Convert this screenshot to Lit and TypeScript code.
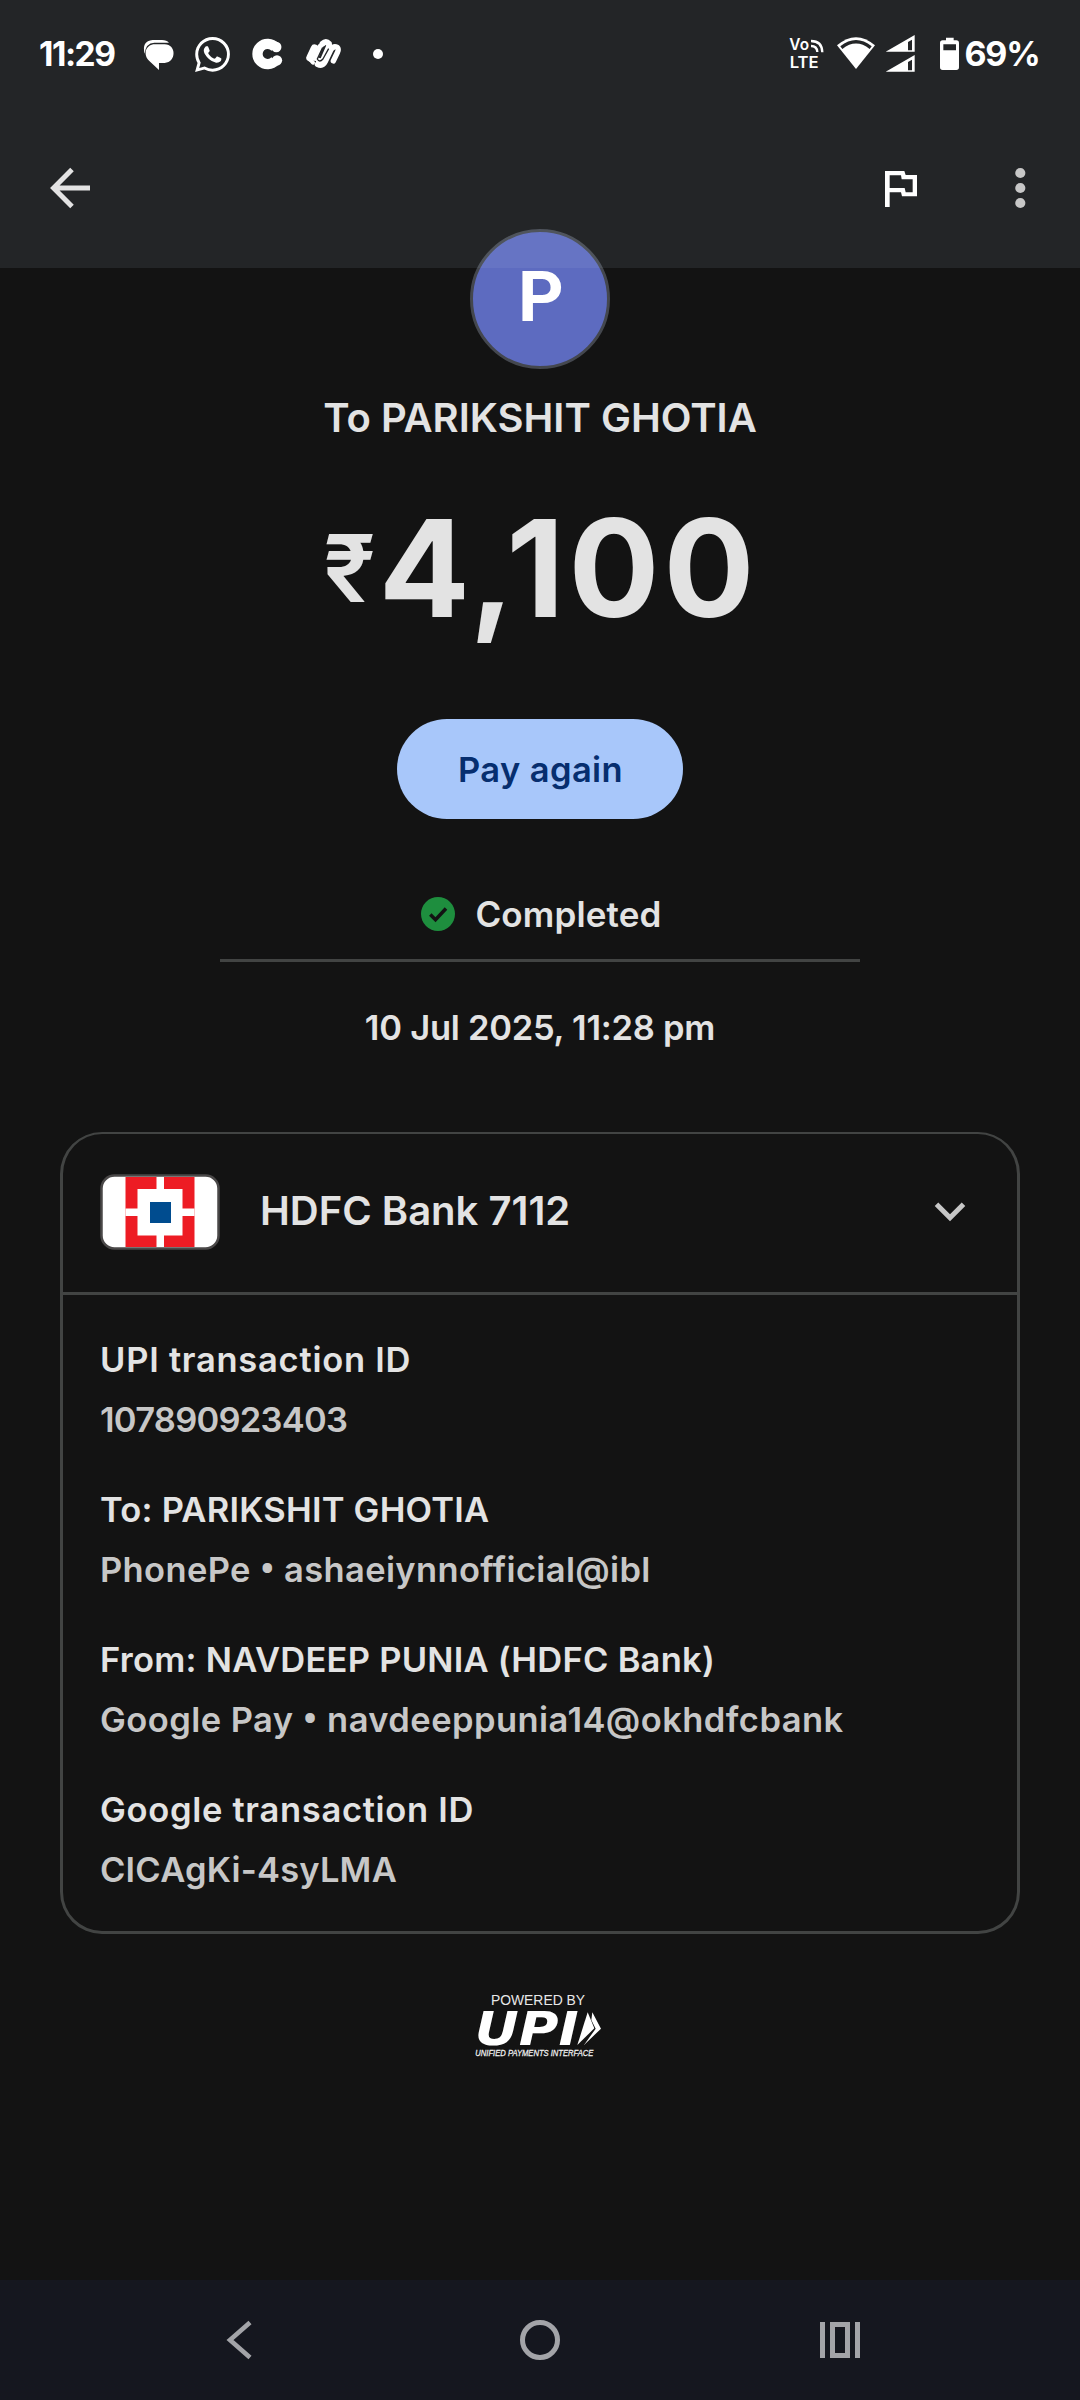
import { LitElement, html, css } from "lit";
import { customElement, property } from "lit/decorators.js";

const palette = css`
  :host {
    --surface: #131313;
    --on-surface: #e3e3e3;
    --on-surface-variant: #c7c7c7;
    --outline: #424443;
    font-family: Inter, "Liberation Sans", sans-serif;
    color: var(--on-surface);
  }
  svg {
    display: block;
    flex: none;
    overflow: visible;
  }
`;

@customElement("status-bar")
class StatusBar extends LitElement {
  static styles = [
    palette,
    css`
      :host {
        display: flex;
        justify-content: space-between;
        align-items: center;
        height: 108px;
        color: #fff;
      }
      .side {
        display: flex;
        align-items: center;
      }
      .left {
        padding-left: 39px;
      }
      .right {
        width: 292px;
      }
      .time,
      .percent {
        font-size: 33.5px;
        line-height: 40px;
        font-weight: 700;
        white-space: nowrap;
      }
      .time {
        width: 103px;
        letter-spacing: -1.5px;
      }
      .percent {
        font-size: 34px;
        margin-left: 4px;
        letter-spacing: -1.1px;
      }
      .wa { margin: 1px 21px 0 20px; }
      .wave { margin-left: 20px; }
      .dot {
        width: 10px;
        height: 10px;
        border-radius: 50%;
        background: #fff;
        margin-left: 31px;
      }
      .wifi { margin: 0 9px 0 11px; }
      .battery { margin-left: 24px; }
      .lte {
        font-family: Inter, sans-serif;
        font-weight: 600;
      }
    `,
  ];

  render() {
    return html`
      <div class="side left">
        <span class="time">11:29</span>
        <svg width="33.3" height="33.3" viewBox="426 112 100 100">
          <path fill="#fff" d="M458 121H486Q500 121 507 129H463Q437 130 434 162Q424 125 458 121Z" />
          <path fill="#fff" d="M465 134H494C530 134 530 188 494 190H477V211L448 184C428 166 436 134 465 134Z" />
        </svg>
        <svg class="wa" width="35" height="35" viewBox="0 0 24 24">
          <path fill="#fff" d="M17.472 14.382c-.297-.149-1.758-.867-2.03-.967-.273-.099-.471-.148-.67.15-.197.297-.767.966-.94 1.164-.173.199-.347.223-.644.075-.297-.15-1.255-.463-2.39-1.475-.883-.788-1.48-1.761-1.653-2.059-.173-.297-.018-.458.13-.606.134-.133.298-.347.446-.52.149-.174.198-.298.298-.497.099-.198.05-.371-.025-.52-.075-.149-.669-1.612-.916-2.207-.242-.579-.487-.5-.669-.51-.173-.008-.371-.01-.57-.01-.198 0-.52.074-.792.372-.272.297-1.04 1.016-1.04 2.479 0 1.462 1.065 2.875 1.213 3.074.149.198 2.096 3.2 5.077 4.487.709.306 1.262.489 1.694.625.712.227 1.36.195 1.871.118.571-.085 1.758-.719 2.006-1.413.248-.694.248-1.289.173-1.413-.074-.124-.272-.198-.57-.347m-5.421 7.403h-.004a9.87 9.87 0 01-5.031-1.378l-.361-.214-3.741.982.998-3.648-.235-.374a9.86 9.86 0 01-1.51-5.26c.001-5.45 4.436-9.884 9.888-9.884 2.64 0 5.122 1.03 6.988 2.898a9.825 9.825 0 012.893 6.994c-.003 5.45-4.437 9.884-9.885 9.884m8.413-18.297A11.815 11.815 0 0012.05 0C5.495 0 .16 5.335.157 11.892c0 2.096.547 4.142 1.588 5.945L.057 24l6.305-1.654a11.882 11.882 0 005.683 1.448h.005c6.554 0 11.89-5.335 11.893-11.893a11.821 11.821 0 00-3.48-8.413z" />
        </svg>
        <svg width="33.3" height="33.3" viewBox="756 112 100 100">
          <path d="M829 143A30.5 30.5 0 1 0 829 183" fill="none" stroke="#fff" stroke-width="31" />
          <circle cx="832" cy="142" r="15.5" fill="#fff" />
          <circle cx="834" cy="182" r="15.5" fill="#fff" />
        </svg>
        <svg class="wave" width="37.3" height="33.3" viewBox="915 112 112 100">
          <g fill="none" stroke="#fff" stroke-linecap="round" stroke-linejoin="round">
            <path stroke-width="24" d="M944 146L931 174" />
            <path stroke-width="12" d="M926 174L939 189" />
            <path stroke-width="18" d="M968 132Q978 122 987 132Q989 138 985 146L970 180Q965 188 957 184" />
            <path stroke-width="16" d="M961 140L946 176" />
            <path stroke-width="16" d="M952 194Q968 202 976 186L993 150Q1001 137 1012 143Q1017 148 1013 157L1000 184" />
          </g>
          <path d="M968 144L952 178Q958 190 969 178L986 147" fill="none" stroke="#232527" stroke-width="4" />
        </svg>
        <span class="dot"></span>
      </div>
      <div class="side right">
        <svg width="36.7" height="33.3" viewBox="84 112 110 100" fill="#fff">
          <text class="lte" x="88" y="152" font-size="47" textLength="59" lengthAdjust="spacingAndGlyphs">Vo</text>
          <text class="lte" x="89" y="205" font-size="48" textLength="87" lengthAdjust="spacingAndGlyphs">LTE</text>
          <g fill="none" stroke="#fff" stroke-width="7">
            <path d="M153 124Q186 124 187 158" />
            <path d="M153 139Q171 139 172 157" />
          </g>
        </svg>
        <svg class="wifi" width="40" height="40" viewBox="228 102 120 120">
          <path fill="#fff" d="M231 136Q288 87 345 136L288 207Z" />
          <path fill="none" stroke="#232527" stroke-width="10" d="M244 143Q288 108 332 143" />
        </svg>
        <svg width="30.7" height="40" viewBox="376 102 92 120">
          <path fill="#fff" fill-rule="evenodd" d="M378 155L465 105V155ZM445 126V151H457V119ZM378 215L465 165V215ZM445 186V211H457V179Z" />
        </svg>
        <svg class="battery" width="21" height="33.3" viewBox="540 110 63 100">
          <path fill="#fff" fill-rule="evenodd" d="M561 112H584V120H592Q600 120 600 128V201Q600 209 592 209H551Q543 209 543 201V128Q543 120 551 120H561ZM553 132V150H591V132Z" />
        </svg>
        <span class="percent">69%</span>
      </div>
    `;
  }
}

@customElement("app-toolbar")
class AppToolbar extends LitElement {
  static styles = [
    palette,
    css`
      :host {
        display: flex;
        align-items: center;
        height: 160px;
        padding: 0 54px 0 50px;
      }
      .spacer { flex: 1; }
      .dots { margin-left: 98px; }
    `,
  ];

  render() {
    return html`
      <svg width="40" height="40" viewBox="0 0 40 40" fill="none" stroke="#e3e3e3" stroke-width="5">
        <path d="M40 20H5M22 1.6L3.6 20L22 38.4" />
      </svg>
      <span class="spacer"></span>
      <svg width="32" height="36" viewBox="75 63 96 108">
        <path fill="#fff" fill-rule="evenodd" d="M75 63H133L137 75H171V139H126L123 127H89V171H75ZM89 76V114H134L137 127H158V88H125L123 76Z" transform="translate(0 3)" />
      </svg>
      <svg class="dots" width="10.6" height="42" viewBox="0 0 10.6 42" fill="#c7c7c7">
        <circle cx="5.3" cy="6" r="5.1" />
        <circle cx="5.3" cy="21" r="5.1" />
        <circle cx="5.3" cy="36" r="5.1" />
      </svg>
    `;
  }
}

interface Detail {
  label: string;
  value: string[];
  kind: string;
}

@customElement("transaction-card")
class TransactionCard extends LitElement {
  @property() account = "HDFC Bank 7112";
  @property({ attribute: false }) details: Detail[] = [
    { label: "UPI transaction ID", value: ["107890923403"], kind: "upi" },
    { label: "To: PARIKSHIT GHOTIA", value: ["PhonePe", "ashaeiynnofficial@ibl"], kind: "to" },
    { label: "From: NAVDEEP PUNIA (HDFC Bank)", value: ["Google Pay", "navdeeppunia14@okhdfcbank"], kind: "from" },
    { label: "Google transaction ID", value: ["CICAgKi-4syLMA"], kind: "google" },
  ];

  static styles = [
    palette,
    css`
      :host {
        display: block;
        box-sizing: border-box;
        width: 960px;
        border: 3px solid var(--outline);
        border-top-width: 2px;
        border-radius: 42px;
        font-weight: 600;
      }
      .head {
        display: flex;
        align-items: center;
        height: 158px;
        padding: 0 51px 0 37px;
        border-bottom: 3px solid var(--outline);
      }
      .logo { margin-bottom: 2px; }
      .title {
        flex: 1;
        margin: 0 0 4px 40px;
        font-size: 40px;
        line-height: 50px;
        letter-spacing: 0;
      }
      .body {
        display: flex;
        flex-direction: column;
        gap: 30px;
        padding: 35px 37px 31px;
        font-size: 34.5px;
        line-height: 60px;
        white-space: nowrap;
      }
      .value { color: var(--on-surface-variant); }
      .bullet {
        font-family: Roboto, sans-serif;
        font-size: 42px;
        line-height: 0;
        vertical-align: -1.5px;
      }
      .upi .label { letter-spacing: 0.75px; }
      .upi .value { letter-spacing: -0.75px; }
      .to .label { letter-spacing: 0.22px; }
      .to .value { letter-spacing: 0.35px; }
      .from .label { letter-spacing: 0.25px; }
      .from .value { letter-spacing: 0.44px; }
      .google .label { letter-spacing: 0.7px; }
      .google .value { letter-spacing: 0.2px; }
    `,
  ];

  render() {
    return html`
      <div class="head">
        <svg class="logo" width="120" height="76" viewBox="0 0 120 76">
          <rect x="1.5" y="1.5" width="117" height="73" rx="13" fill="#fff" />
          <path fill="#ed1c24" d="M25.500 3H94.500V73H25.500Z" />
          <path fill="#fff" d="M37.500 15H82.500V61.500H37.500ZM56.500 3H64V73H56.500ZM25.500 34.500H94.500V42H25.500Z" />
          <path fill="#004c8f" d="M50 28H71V49H50Z" />
          <rect x="1.5" y="1.5" width="117" height="73" rx="13" fill="none" stroke="#4a4848" stroke-width="2.500" />
        </svg>
        <span class="title">${this.account}</span>
        <svg width="32" height="20" viewBox="0 0 32 20">
          <path d="M2.500 1.200L16 14.700L29.500 1.200" fill="none" stroke="#c7c7c7" stroke-width="5" />
        </svg>
      </div>
      <div class="body">
        ${this.details.map(
          (d) => html`<div class="${d.kind}">
            <div class="label">${d.label}</div>
            <div class="value">${d.value.map((v, i) => (i ? html` <span class="bullet">•</span> ${v}` : v))}</div>
          </div>`
        )}
      </div>
    `;
  }
}

@customElement("nav-bar")
class NavBar extends LitElement {
  static styles = [
    palette,
    css`
      :host {
        display: grid;
        grid-template-columns: repeat(3, 300px);
        justify-content: center;
        place-items: center;
        height: 120px;
        background: #15171f;
      }
    `,
  ];

  render() {
    return html`
      <svg width="28" height="40" viewBox="0 0 28 40">
        <path d="M24 2.500L4 20L24 37.500" fill="none" stroke="#a3a4a8" stroke-width="4.600" />
      </svg>
      <svg width="40" height="40" viewBox="0 0 40 40">
        <circle cx="20" cy="20" r="17.500" fill="none" stroke="#a3a4a8" stroke-width="5" />
      </svg>
      <svg width="40" height="36" viewBox="0 0 40 36">
        <path fill="#a3a4a8" fill-rule="evenodd" d="M0 0H5V36H0ZM35 0H40V36H35ZM10 0H30V36H10ZM15 5V31H25V5Z" />
      </svg>
    `;
  }
}

@customElement("app-root")
class AppRoot extends LitElement {
  static styles = [
    palette,
    css`
      :host {
        display: flex;
        flex-direction: column;
        width: 1080px;
        height: 2400px;
        background: var(--surface);
        overflow: hidden;
      }
      header {
        position: relative;
        z-index: 1;
        height: 268px;
        flex: none;
        background: rgba(187, 208, 229, 0.095);
      }
      main {
        flex: 1;
        display: flex;
        flex-direction: column;
        align-items: center;
        margin-top: -39px;
        font-weight: 600;
        white-space: nowrap;
      }
      .avatar {
        box-sizing: border-box;
        width: 140px;
        height: 140px;
        border-radius: 50%;
        border: 3px solid #44474e;
        background: #5d6bc0;
        color: #fff;
        font-family: Roboto, sans-serif;
        font-size: 71px;
        line-height: 130px;
        font-weight: 700;
        text-align: center;
        padding-left: 2px;
      }
      .payee {
        margin-top: 23px;
        font-size: 40px;
        line-height: 51px;
        letter-spacing: 0px;
      }
      .amount {
        display: flex;
        align-items: center;
        margin-top: 57px;
        font-size: 135px;
        line-height: 136px;
        font-weight: 700;
        letter-spacing: 4px;
        padding-left: 2px;
      }
      .rupee {
        font-size: 93px;
        font-weight: 600;
        letter-spacing: 0;
        margin-right: 3px;
      }
      .pay {
        margin-top: 83px;
        width: 286px;
        height: 100px;
        border: 0;
        border-radius: 50px;
        padding: 2px 0 0 1px;
        background: #a8c7fa;
        color: #062e6f;
        font: 600 34.5px/98px Inter, sans-serif;
        letter-spacing: 0.4px;
      }
      .state {
        display: flex;
        align-items: center;
        gap: 20px;
        margin-top: 70px;
        padding-left: 3px;
        font-size: 35px;
        line-height: 50px;
        letter-spacing: 0.15px;
      }
      .rule {
        width: 640px;
        height: 3px;
        margin-top: 20px;
        background: var(--outline);
      }
      .date {
        margin-top: 40px;
        font-size: 34.5px;
        line-height: 51px;
        letter-spacing: -0.25px;
      }
      transaction-card { margin-top: 79px; }
      .upi { margin-top: 36px; }
      .powered { font-family: "Liberation Sans", sans-serif; font-weight: 400; }
      .mark { font-family: "DejaVu Sans", sans-serif; font-weight: 700; font-style: italic; }
      .tag { font-family: "Liberation Sans", sans-serif; font-weight: 400; font-style: italic; }
    `,
  ];

  render() {
    return html`
      <header>
        <status-bar></status-bar>
        <app-toolbar></app-toolbar>
      </header>
      <main>
        <div class="avatar">P</div>
        <div class="payee">To PARIKSHIT GHOTIA</div>
        <div class="amount"><span class="rupee">₹</span><span>4,100</span></div>
        <button class="pay">Pay again</button>
        <div class="state">
          <svg width="34" height="34" viewBox="0 0 34 34">
            <circle cx="17" cy="17" r="17" fill="#1e8e3e" />
            <path d="M9.300 17.500L14.500 22.700L25 11.500" fill="none" stroke="#131313" stroke-width="3.500" />
          </svg>
          <span>Completed</span>
        </div>
        <div class="rule"></div>
        <div class="date">10 Jul 2025, 11:28 pm</div>
        <transaction-card></transaction-card>
        <svg class="upi" width="180" height="110" viewBox="0 0 540 330" fill="#fff">
          <text class="powered" x="123" y="105" font-size="46" textLength="282" lengthAdjust="spacingAndGlyphs" fill="#e8e8e8">POWERED BY</text>
          <text class="mark" x="74" y="225" font-size="136" textLength="312" lengthAdjust="spacingAndGlyphs">UPI</text>
          <path d="M427 127L453 176L402 225L437 176L424 150Z" />
          <path d="M413 127L433 175L382 225Z" />
          <text class="tag" x="76" y="258" font-size="26" textLength="354" lengthAdjust="spacingAndGlyphs" fill="#f0f0f0" stroke="#f0f0f0" stroke-width="0.8">UNIFIED PAYMENTS INTERFACE</text>
        </svg>
      </main>
      <nav-bar></nav-bar>
    `;
  }
}
